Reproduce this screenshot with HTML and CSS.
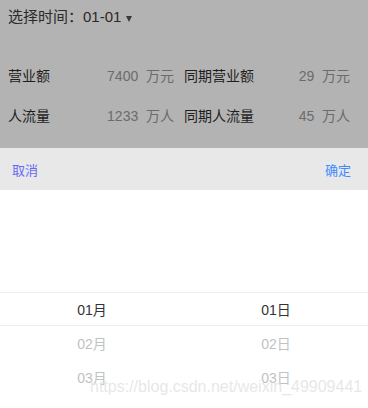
FILE: index.html
```html
<!DOCTYPE html>
<html lang="zh">
<head>
    <meta charset="UTF-8">
    <meta name="viewport" content="width=device-width, initial-scale=1.0">
    <title>选择时间</title>
    <link rel="stylesheet" href="styles.css">
</head>
<body>
    <div class="page">
        <div class="summary">
            <div class="date-select">选择时间：01-01<span class="caret"></span></div>
            <div class="stats">
                <div class="stat">
                    <span class="label">营业额</span>
                    <span class="value">7400&nbsp;&nbsp;万元</span>
                </div>
                <div class="stat">
                    <span class="label">同期营业额</span>
                    <span class="value">29&nbsp;&nbsp;万元</span>
                </div>
                <div class="stat">
                    <span class="label">人流量</span>
                    <span class="value">1233&nbsp;&nbsp;万人</span>
                </div>
                <div class="stat">
                    <span class="label">同期人流量</span>
                    <span class="value">45&nbsp;&nbsp;万人</span>
                </div>
            </div>
        </div>

        <div class="picker">
            <div class="toolbar">
                <span class="btn-cancel">取消</span>
                <span class="btn-confirm">确定</span>
            </div>
            <div class="columns">
                <div class="frame"></div>
                <ul class="column">
                    <li></li><li></li><li></li>
                    <li class="active">01月</li>
                    <li>02月</li>
                    <li>03月</li>
                </ul>
                <ul class="column">
                    <li></li><li></li><li></li>
                    <li class="active">01日</li>
                    <li>02日</li>
                    <li>03日</li>
                </ul>
            </div>
        </div>

        <div class="watermark">https://blog.csdn.net/weixin_49909441</div>
    </div>
</body>
</html>
```

FILE: styles.css
```css
* {
    margin: 0;
    padding: 0;
    box-sizing: border-box;
}

body {
    font-family: "Liberation Sans", "Noto Sans CJK SC", sans-serif;
    background-color: #fff;
    overflow: hidden;
}

.page {
    position: relative;
    width: 368px;
    height: 408px;
    overflow: hidden;
}

/* dimmed area behind the popup */
.summary {
    height: 148px;
    background-color: #b3b3b3;
    padding: 0 8px;
}

.date-select {
    font-size: 15px;
    color: #2a2a2a;
    line-height: 20px;
    padding-top: 7px;
    display: flex;
    align-items: center;
}

.caret {
    display: inline-block;
    width: 0;
    height: 0;
    border-left: 3.5px solid transparent;
    border-right: 3.5px solid transparent;
    border-top: 6px solid #3a3a3a;
    margin: 3px 0 0 5px;
}

.stats {
    display: grid;
    grid-template-columns: 1fr 1fr;
    margin-top: 39px;
    row-gap: 20px;
}

.stat {
    display: flex;
    justify-content: space-between;
    align-items: center;
    font-size: 14px;
    line-height: 20px;
    padding-right: 10px;
}

.label {
    color: #1e1e1e;
}

.value {
    color: #6b6b6b;
}

.picker {
    background-color: #fff;
}

.toolbar {
    height: 42px;
    background-color: #e8e8e8;
    display: flex;
    justify-content: space-between;
    align-items: center;
    padding: 0 17px 0 12px;
    font-size: 13px;
}

.btn-cancel {
    color: #6767f6;
}

.btn-confirm {
    color: #3d8bff;
}

.columns {
    position: relative;
    display: flex;
    height: 238px;
}

.frame {
    position: absolute;
    left: 0;
    right: 0;
    top: 102px;
    height: 34px;
    border-top: 1px solid #ebedf0;
    border-bottom: 1px solid #ebedf0;
}

.column {
    flex: 1;
    list-style: none;
}

.column li {
    height: 34px;
    line-height: 36px;
    text-align: center;
    font-size: 14px;
    color: #c2c2c2;
}

.column li.active {
    color: #333;
}

.watermark {
    position: absolute;
    left: 90px;
    top: 378px;
    font-size: 16px;
    color: rgba(225, 225, 225, 0.8);
    white-space: nowrap;
}
```
